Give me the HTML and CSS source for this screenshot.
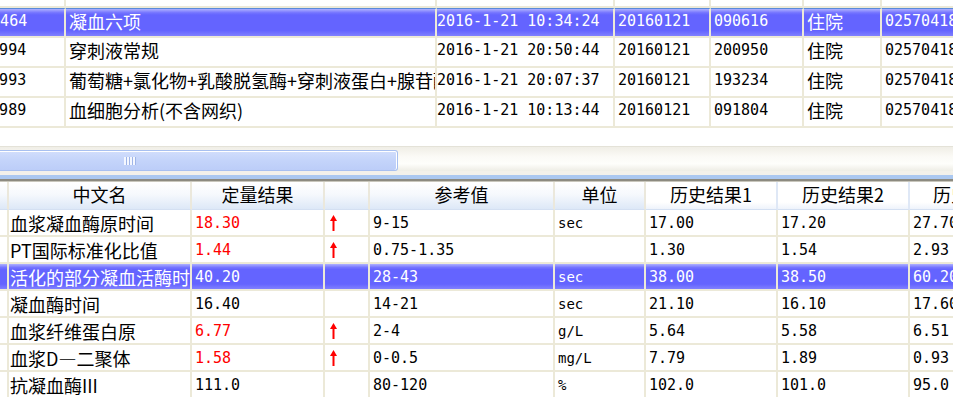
FILE: index.html
```html
<!DOCTYPE html>
<html lang="zh-CN">
<head>
    <meta charset="UTF-8">
    <title>检验结果</title>
    <link rel="stylesheet" href="styles.css">
</head>
<body>
    <div class="top-pane">
        <table class="grid top-grid">
            <colgroup>
                <col class="c-id"><col class="c-name"><col class="c-date">
                <col class="c-day"><col class="c-no"><col class="c-type"><col class="c-pid">
            </colgroup>
            <tr class="partial"><td></td><td></td><td></td><td></td><td></td><td></td><td></td></tr>
            <tr class="sel">
                <td class="num">1001464</td><td class="cjk">凝血六项</td><td class="num date">2016-1-21 10:34:24</td>
                <td class="num">20160121</td><td class="num">090616</td><td class="cjk">住院</td><td class="num">025704186</td>
            </tr>
            <tr>
                <td class="num">1000994</td><td class="cjk">穿刺液常规</td><td class="num date">2016-1-21 20:50:44</td>
                <td class="num">20160121</td><td class="num">200950</td><td class="cjk">住院</td><td class="num">025704186</td>
            </tr>
            <tr>
                <td class="num">1000993</td><td class="cjk">葡萄糖+氯化物+乳酸脱氢酶+穿刺液蛋白+腺苷酶</td><td class="num date">2016-1-21 20:07:37</td>
                <td class="num">20160121</td><td class="num">193234</td><td class="cjk">住院</td><td class="num">025704186</td>
            </tr>
            <tr>
                <td class="num">1000989</td><td class="cjk">血细胞分析(不含网织)</td><td class="num date">2016-1-21 10:13:44</td>
                <td class="num">20160121</td><td class="num">091804</td><td class="cjk">住院</td><td class="num">025704186</td>
            </tr>
        </table>
    </div>

    <div class="hscroll">
        <div class="thumb"><span class="grip"></span></div>
    </div>
    <div class="splitter"></div>

    <div class="bottom-pane">
        <table class="grid result-grid">
            <colgroup>
                <col class="r-ind"><col class="r-name"><col class="r-val"><col class="r-flag">
                <col class="r-ref"><col class="r-unit"><col class="r-h1"><col class="r-h2"><col class="r-h3">
            </colgroup>
            <tr class="head">
                <th></th><th>中文名</th><th>定量结果</th><th></th><th>参考值</th><th>单位</th>
                <th class="hist">历史结果1</th><th class="hist">历史结果2</th><th class="hist">历史结果3</th>
            </tr>
            <tr>
                <td></td><td class="cjk">血浆凝血酶原时间</td><td class="num high">18.30</td>
                <td class="flag"><svg width="7" height="16" viewBox="0 0 7 16"><polygon points="3.5,0 7,6 0,6" fill="#ff0000"/><rect x="2.5" y="5" width="2" height="11" fill="#ff0000"/></svg></td>
                <td class="num">9-15</td><td class="num unit">sec</td><td class="num">17.00</td><td class="num">17.20</td><td class="num">27.70</td>
            </tr>
            <tr>
                <td></td><td class="cjk">PT国际标准化比值</td><td class="num high">1.44</td>
                <td class="flag"><svg width="7" height="16" viewBox="0 0 7 16"><polygon points="3.5,0 7,6 0,6" fill="#ff0000"/><rect x="2.5" y="5" width="2" height="11" fill="#ff0000"/></svg></td>
                <td class="num">0.75-1.35</td><td class="num unit"></td><td class="num">1.30</td><td class="num">1.54</td><td class="num">2.93</td>
            </tr>
            <tr class="sel">
                <td></td><td class="cjk">活化的部分凝血活酶时间</td><td class="num">40.20</td><td class="flag"></td>
                <td class="num">28-43</td><td class="num unit">sec</td><td class="num">38.00</td><td class="num">38.50</td><td class="num">60.20</td>
            </tr>
            <tr>
                <td></td><td class="cjk">凝血酶时间</td><td class="num">16.40</td><td class="flag"></td>
                <td class="num">14-21</td><td class="num unit">sec</td><td class="num">21.10</td><td class="num">16.10</td><td class="num">17.60</td>
            </tr>
            <tr>
                <td></td><td class="cjk">血浆纤维蛋白原</td><td class="num high">6.77</td>
                <td class="flag"><svg width="7" height="16" viewBox="0 0 7 16"><polygon points="3.5,0 7,6 0,6" fill="#ff0000"/><rect x="2.5" y="5" width="2" height="11" fill="#ff0000"/></svg></td>
                <td class="num">2-4</td><td class="num unit">g/L</td><td class="num">5.64</td><td class="num">5.58</td><td class="num">6.51</td>
            </tr>
            <tr>
                <td></td><td class="cjk">血浆D—二聚体</td><td class="num high">1.58</td>
                <td class="flag"><svg width="7" height="16" viewBox="0 0 7 16"><polygon points="3.5,0 7,6 0,6" fill="#ff0000"/><rect x="2.5" y="5" width="2" height="11" fill="#ff0000"/></svg></td>
                <td class="num">0-0.5</td><td class="num unit">mg/L</td><td class="num">7.79</td><td class="num">1.89</td><td class="num">0.93</td>
            </tr>
            <tr>
                <td></td><td class="cjk">抗凝血酶III</td><td class="num">111.0</td><td class="flag"></td>
                <td class="num">80-120</td><td class="num unit">%</td><td class="num">102.0</td><td class="num">101.0</td><td class="num">95.0</td>
            </tr>
        </table>
    </div>
</body>
</html>
```

FILE: styles.css
```css
* {
    margin: 0;
    padding: 0;
    box-sizing: border-box;
}
body {
    width: 953px;
    height: 397px;
    overflow: hidden;
    background-color: #ffffff;
    color: #000000;
    font-family: "Noto Sans CJK SC", sans-serif;
}

/* grids */
.grid {
    border-collapse: separate;
    border-spacing: 0;
    table-layout: fixed;
    width: 1040px;
}
.grid td,
.grid th {
    border-right: 2px solid #ece9d8;
    border-bottom: 2px solid #ece9d8;
    padding: 0 0 0 3px;
    white-space: nowrap;
    overflow: hidden;
    vertical-align: middle;
    text-align: left;
}
.cjk {
    font-family: "Noto Sans CJK SC", sans-serif;
    font-size: 18px;
    line-height: 20px;
}
.num {
    font-family: "DejaVu Sans Mono", monospace;
    font-size: 15px;
    line-height: 18px;
}
.unit {
    font-size: 14px;
}
.high {
    color: #ff0000;
}
.sel td {
    color: #ffffff;
    background: linear-gradient(to bottom, #aeb0ff 0%, #7474ff 14%, #6464ff 22%, #6464ff 80%, #8080ff 100%);
}

/* top list */
.top-pane {
    height: 146px;
    overflow: hidden;
    background-color: #ffffff;
}
.top-grid {
    margin-left: -40px;
    margin-top: -22px;
}
.top-grid td {
    height: 30px;
    padding-bottom: 4px;
}
.top-grid td.date {
    padding-left: 0;
}
.top-grid .sel td {
    border-top: 1px solid #5a8ad8;
}
.top-grid .sel td:first-child {
    padding-left: 4px;
}
.c-id { width: 106px; }
.c-name { width: 371px; }
.c-date { width: 178px; }
.c-day { width: 96px; }
.c-no { width: 93px; }
.c-type { width: 78px; }
.c-pid { width: 118px; }

/* horizontal scrollbar */
.hscroll {
    height: 25px;
    padding-top: 3px;
    border-top: 1px solid #e4e2d8;
    background: linear-gradient(to bottom, #f0eee6 0%, #fbfaf6 40%, #fefefb 70%, #eeede5 100%);
}
.thumb {
    width: 398px;
    height: 21px;
    display: flex;
    align-items: center;
    justify-content: center;
    padding-right: 138px;
    border: 1px solid #a8c0f0;
    border-left: none;
    border-radius: 0 3px 3px 0;
    background: linear-gradient(to bottom, #d2defc 0%, #c4d4fa 50%, #bccdf8 100%);
    box-shadow: inset 0 1px 0 #ffffff, inset -1px 0 0 #ffffff;
}
.grip {
    width: 12px;
    height: 8px;
    background: repeating-linear-gradient(to right, #f4f7ff 0, #f4f7ff 2px, #9fb5e8 2px, #9fb5e8 3px);
}

.splitter {
    height: 11px;
    background: linear-gradient(to bottom, #f3f1ea 0, #f3f1ea 4px, #abc8f0 4px, #abc8f0 8px, #8c8a80 8px, #8c8a80 10px, #c8c6bc 10px);
}

/* results */
.bottom-pane {
    height: 215px;
    overflow: hidden;
}
.result-grid td {
    height: 27px;
}
.result-grid .head th {
    height: 28px;
    font-weight: normal;
    font-size: 18px;
    line-height: 20px;
    text-align: center;
    padding: 0 0 3px 0;
    border-right: 2px solid #ebe8dc;
    border-bottom: 1px solid #d4e0f2;
    background: linear-gradient(to bottom, #ffffff 0%, #f6f9fd 45%, #dde8f7 100%);
}
.result-grid .head th.hist {
    background: linear-gradient(to bottom, #ffffff 0%, #ffffff 75%, #eef3fb 100%);
    border-right-color: #dfe8f6;
}
.result-grid .cjk {
    padding-left: 1px;
}
.result-grid .flag {
    padding-left: 5px;
}
.result-grid .flag svg {
    display: block;
}
.r-ind { width: 9px; }
.r-name { width: 183px; }
.r-val { width: 133px; }
.r-flag { width: 45px; }
.r-ref { width: 185px; }
.r-unit { width: 91px; }
.r-h1 { width: 132px; }
.r-h2 { width: 132px; }
.r-h3 { width: 130px; }
```
